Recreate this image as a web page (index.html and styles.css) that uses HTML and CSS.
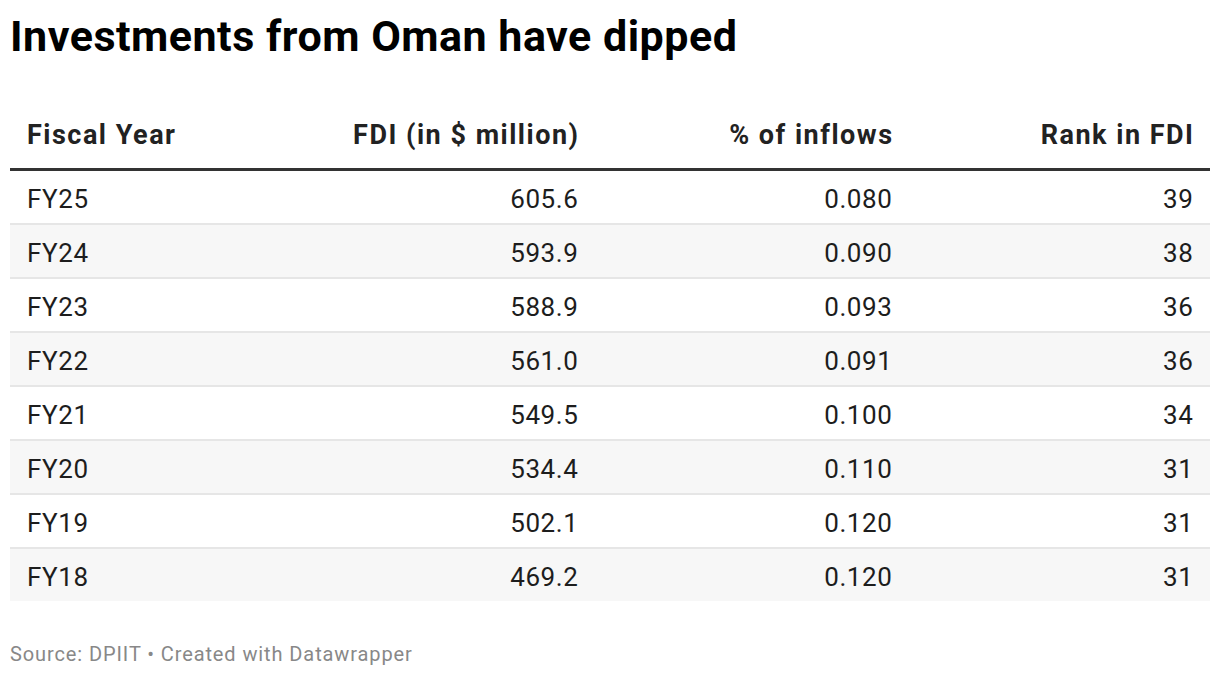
FILE: index.html
```html
<!DOCTYPE html>
<html lang="en">
<head>
<meta charset="utf-8">
<title>Investments from Oman have dipped</title>
<link rel="stylesheet" href="styles.css">
</head>
<body>
<div class="chart">
  <h1 class="title">Investments from Oman have dipped</h1>
  <table class="data">
    <colgroup>
      <col class="c1"><col class="c2"><col class="c3"><col class="c4">
    </colgroup>
    <thead>
      <tr>
        <th class="left">Fiscal Year</th>
        <th class="right">FDI (in $ million)</th>
        <th class="right">% of inflows</th>
        <th class="right">Rank in FDI</th>
      </tr>
    </thead>
    <tbody>
      <tr><td class="left">FY25</td><td class="right">605.6</td><td class="right">0.080</td><td class="right">39</td></tr>
      <tr><td class="left">FY24</td><td class="right">593.9</td><td class="right">0.090</td><td class="right">38</td></tr>
      <tr><td class="left">FY23</td><td class="right">588.9</td><td class="right">0.093</td><td class="right">36</td></tr>
      <tr><td class="left">FY22</td><td class="right">561.0</td><td class="right">0.091</td><td class="right">36</td></tr>
      <tr><td class="left">FY21</td><td class="right">549.5</td><td class="right">0.100</td><td class="right">34</td></tr>
      <tr><td class="left">FY20</td><td class="right">534.4</td><td class="right">0.110</td><td class="right">31</td></tr>
      <tr><td class="left">FY19</td><td class="right">502.1</td><td class="right">0.120</td><td class="right">31</td></tr>
      <tr><td class="left">FY18</td><td class="right">469.2</td><td class="right">0.120</td><td class="right">31</td></tr>
    </tbody>
  </table>
  <p class="footer">Source: DPIIT • Created with Datawrapper</p>
</div>
</body>
</html>
```
FILE: styles.css
```css
html, body {
  margin: 0;
  padding: 0;
  background: #ffffff;
}
body {
  font-family: Roboto, "Liberation Sans", Arial, sans-serif;
  color: #1d1d1d;
}
.chart {
  padding: 11px 10px 0 10px;
}
.title {
  margin: 0 0 45px 0;
  font-size: 43px;
  line-height: 50px;
  font-weight: 700;
  color: #000000;
  letter-spacing: 0.5px;
}
.data {
  width: 1200px;
  border-collapse: collapse;
  table-layout: fixed;
}
.c1 { width: 290px; }
.c2 { width: 295px; }
.c3 { width: 314px; }
.c4 { width: 301px; }
.data th {
  font-size: 27px;
  line-height: 30px;
  font-weight: 700;
  color: #222222;
  letter-spacing: 1.5px;
  padding: 14px 15.5px 18px 17px;
  border-bottom: 3px solid #333333;
}
.data td {
  font-size: 26px;
  line-height: 30px;
  font-weight: 400;
  color: #1d1d1d;
  letter-spacing: 0.6px;
  padding: 13px 16.5px 9px 17px;
  border-bottom: 2px solid #e6e6e6;
}
.data tbody tr:nth-child(even) td {
  background: #f7f7f7;
}
.data tbody tr:last-child td {
  border-bottom: none;
}
.left { text-align: left; }
.right { text-align: right; }
.footer {
  margin: 41px 0 0 0;
  font-size: 20px;
  line-height: 24px;
  color: #888888;
  letter-spacing: 0.9px;
}
```
